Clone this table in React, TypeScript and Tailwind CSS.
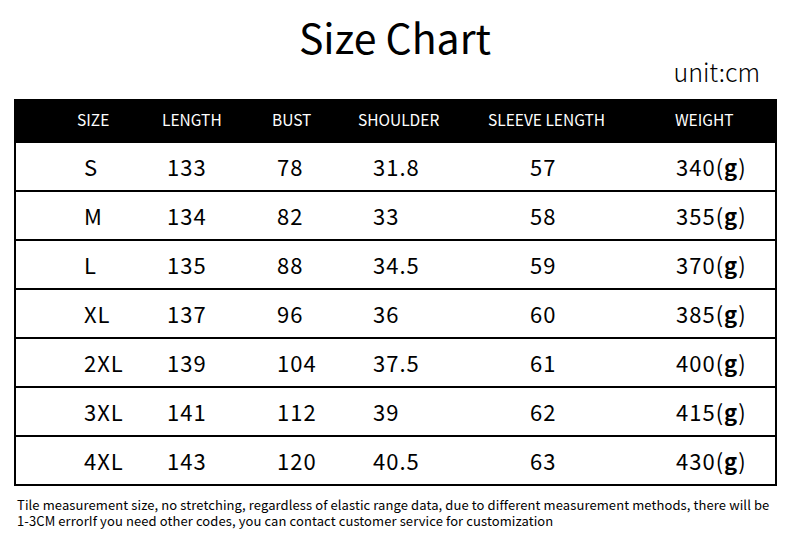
const font = { fontFamily: '"Noto Sans CJK SC", "Noto Sans", sans-serif' };

const columns = [
  { label: "SIZE", head: "pl-[61px]", body: "pl-[68px]" },
  { label: "LENGTH", head: "pl-[22px]", body: "pl-[27px]" },
  { label: "BUST", head: "pl-[22px]", body: "pl-[27px]" },
  { label: "SHOULDER", head: "pl-[13px]", body: "pl-[28px]" },
  { label: "SLEEVE LENGTH", head: "pl-[18px]", body: "pl-[60px]" },
  { label: "WEIGHT", head: "pl-[35px]", body: "pl-[36px]" },
];

const rows = [
  ["S", "133", "78", "31.8", "57", "340"],
  ["M", "134", "82", "33", "58", "355"],
  ["L", "135", "88", "34.5", "59", "370"],
  ["XL", "137", "96", "36", "60", "385"],
  ["2XL", "139", "104", "37.5", "61", "400"],
  ["3XL", "141", "112", "39", "62", "415"],
  ["4XL", "143", "120", "40.5", "63", "430"],
];

const grid = "grid grid-cols-[124px_110px_95px_125px_170px_135px]";

export default function App() {
  return (
    <div className="w-[790px] h-[554px] bg-white text-black" style={font}>
      <h1 className="pt-[12px] text-center text-[41px] leading-[48px] font-normal">
        Size Chart
      </h1>
      <div className="flex justify-end pr-[30px] -mt-[4px] h-[43px]">
        <span className="text-[25px] leading-[30px] font-light">unit:cm</span>
      </div>

      <div className="ml-[14px] w-[763px] border-x-2 border-black">
        {/* header */}
        <div className={`${grid} h-[44px] pb-[3px] bg-black text-white items-center`}>
          {columns.map((c) => (
            <div key={c.label} className={`${c.head} text-[15.5px]`}>
              {c.label}
            </div>
          ))}
        </div>

        {rows.map((r) => (
          <div key={r[0]} className={`${grid} h-[49px] items-center border-b-2 border-black`}>
            {r.map((v, j) => (
              <div key={j} className={`${columns[j].body} text-[22px] tracking-[1px]`}>
                {j === 5 ? (
                  <>
                    {v}(<span className="font-bold">g</span>)
                  </>
                ) : (
                  v
                )}
              </div>
            ))}
          </div>
        ))}
      </div>

      <p className="mt-[11px] ml-[17px] text-[13px] leading-[16px] whitespace-nowrap tracking-[0.1px]">
        Tile measurement size, no stretching, regardless of elastic range data, due to different measurement methods, there will be
        <br />
        1-3CM errorIf you need other codes, you can contact customer service for customization
      </p>
    </div>
  );
}
